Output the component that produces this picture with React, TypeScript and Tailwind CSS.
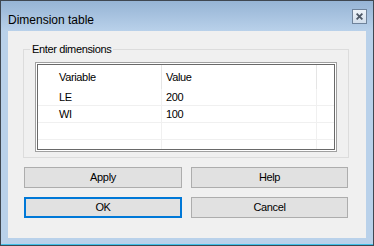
const FONT = { fontFamily: '"Liberation Sans", Arial, sans-serif' };

const rows = [
  { name: "LE", value: "200" },
  { name: "WI", value: "100" },
  { name: "", value: "" },
  { name: "", value: "" },
];

function DlgButton({ label, isDefault }: { label: string; isDefault?: boolean }) {
  return (
    <button
      className={`flex h-[21px] items-center justify-center bg-[#e1e1e1] text-[11px] leading-[13px] tracking-[-0.35px] text-black ${
        isDefault ? "border-2 border-[#0078d7]" : "border border-[#adadad]"
      }`}
    >
      {label}
    </button>
  );
}

export default function App() {
  return (
    <div
      style={FONT}
      className="flex h-[246px] w-[374px] flex-col border border-[#3f4751] bg-[linear-gradient(to_bottom,#96b4d5,#b9d1ea_30px)]"
    >
      {/* Title bar */}
      <div className="flex h-[30px] items-start justify-between pl-[7px] pr-[6px]">
        <span className="mt-[12px] text-[12px] leading-[14px] text-black">Dimension table</span>
        <button className="mt-[8px] flex h-[15px] w-[15px] items-center justify-center border border-[#6f839b] bg-[linear-gradient(to_bottom,#eef3f9,#d3dfec)]">
          <svg width="7" height="7" viewBox="0 0 7 7">
            <path d="M0.6 0.6 L6.4 6.4 M6.4 0.6 L0.6 6.4" stroke="#4d5866" strokeWidth="1.8" />
          </svg>
        </button>
      </div>

      {/* Client area */}
      <div className="mx-[7px] flex h-[207px] flex-col bg-[#f0f0f0] pl-[15px]">
        <fieldset className="mt-[12px] w-[326px] border border-[#dcdcdc]">
          <legend className="ml-[6px] px-[2px] text-[11px] leading-[13px] tracking-[-0.35px] text-black">
            Enter dimensions
          </legend>
          <div className="px-[11px] pb-[5px] pt-[6px]">
            <div className="border border-[#a0a0a0] bg-white p-px">
              <div className="h-[86px] overflow-hidden border border-[#696969] text-[11px] leading-[13px] tracking-[-0.35px] text-black">
                <div className="flex h-[24px] items-center">
                  <div className="flex h-full w-[124px] items-center border-r border-[#e5e5e5] pl-[21px]">Variable</div>
                  <div className="flex h-full w-[155px] items-center border-r border-[#e5e5e5] pl-[4px]">Value</div>
                </div>
                {rows.map((r, i) => (
                  <div key={i} className="flex h-[17px] border-b border-[#f0f0f0]">
                    <div className="w-[124px] border-r border-[#f0f0f0] pl-[21px] pt-[2px]">{r.name}</div>
                    <div className="w-[155px] border-r border-[#f0f0f0] pl-[4px] pt-[2px]">{r.value}</div>
                  </div>
                ))}
              </div>
            </div>
          </div>
        </fieldset>

        <div className="mt-[9px] grid grid-cols-[158px_157px] gap-x-[9px] gap-y-[9px] pl-px">
          <DlgButton label="Apply" />
          <DlgButton label="Help" />
          <DlgButton label="OK" isDefault />
          <DlgButton label="Cancel" />
        </div>
      </div>

      <div className="h-[7px] border-b border-[#40c0e8]" />
    </div>
  );
}
